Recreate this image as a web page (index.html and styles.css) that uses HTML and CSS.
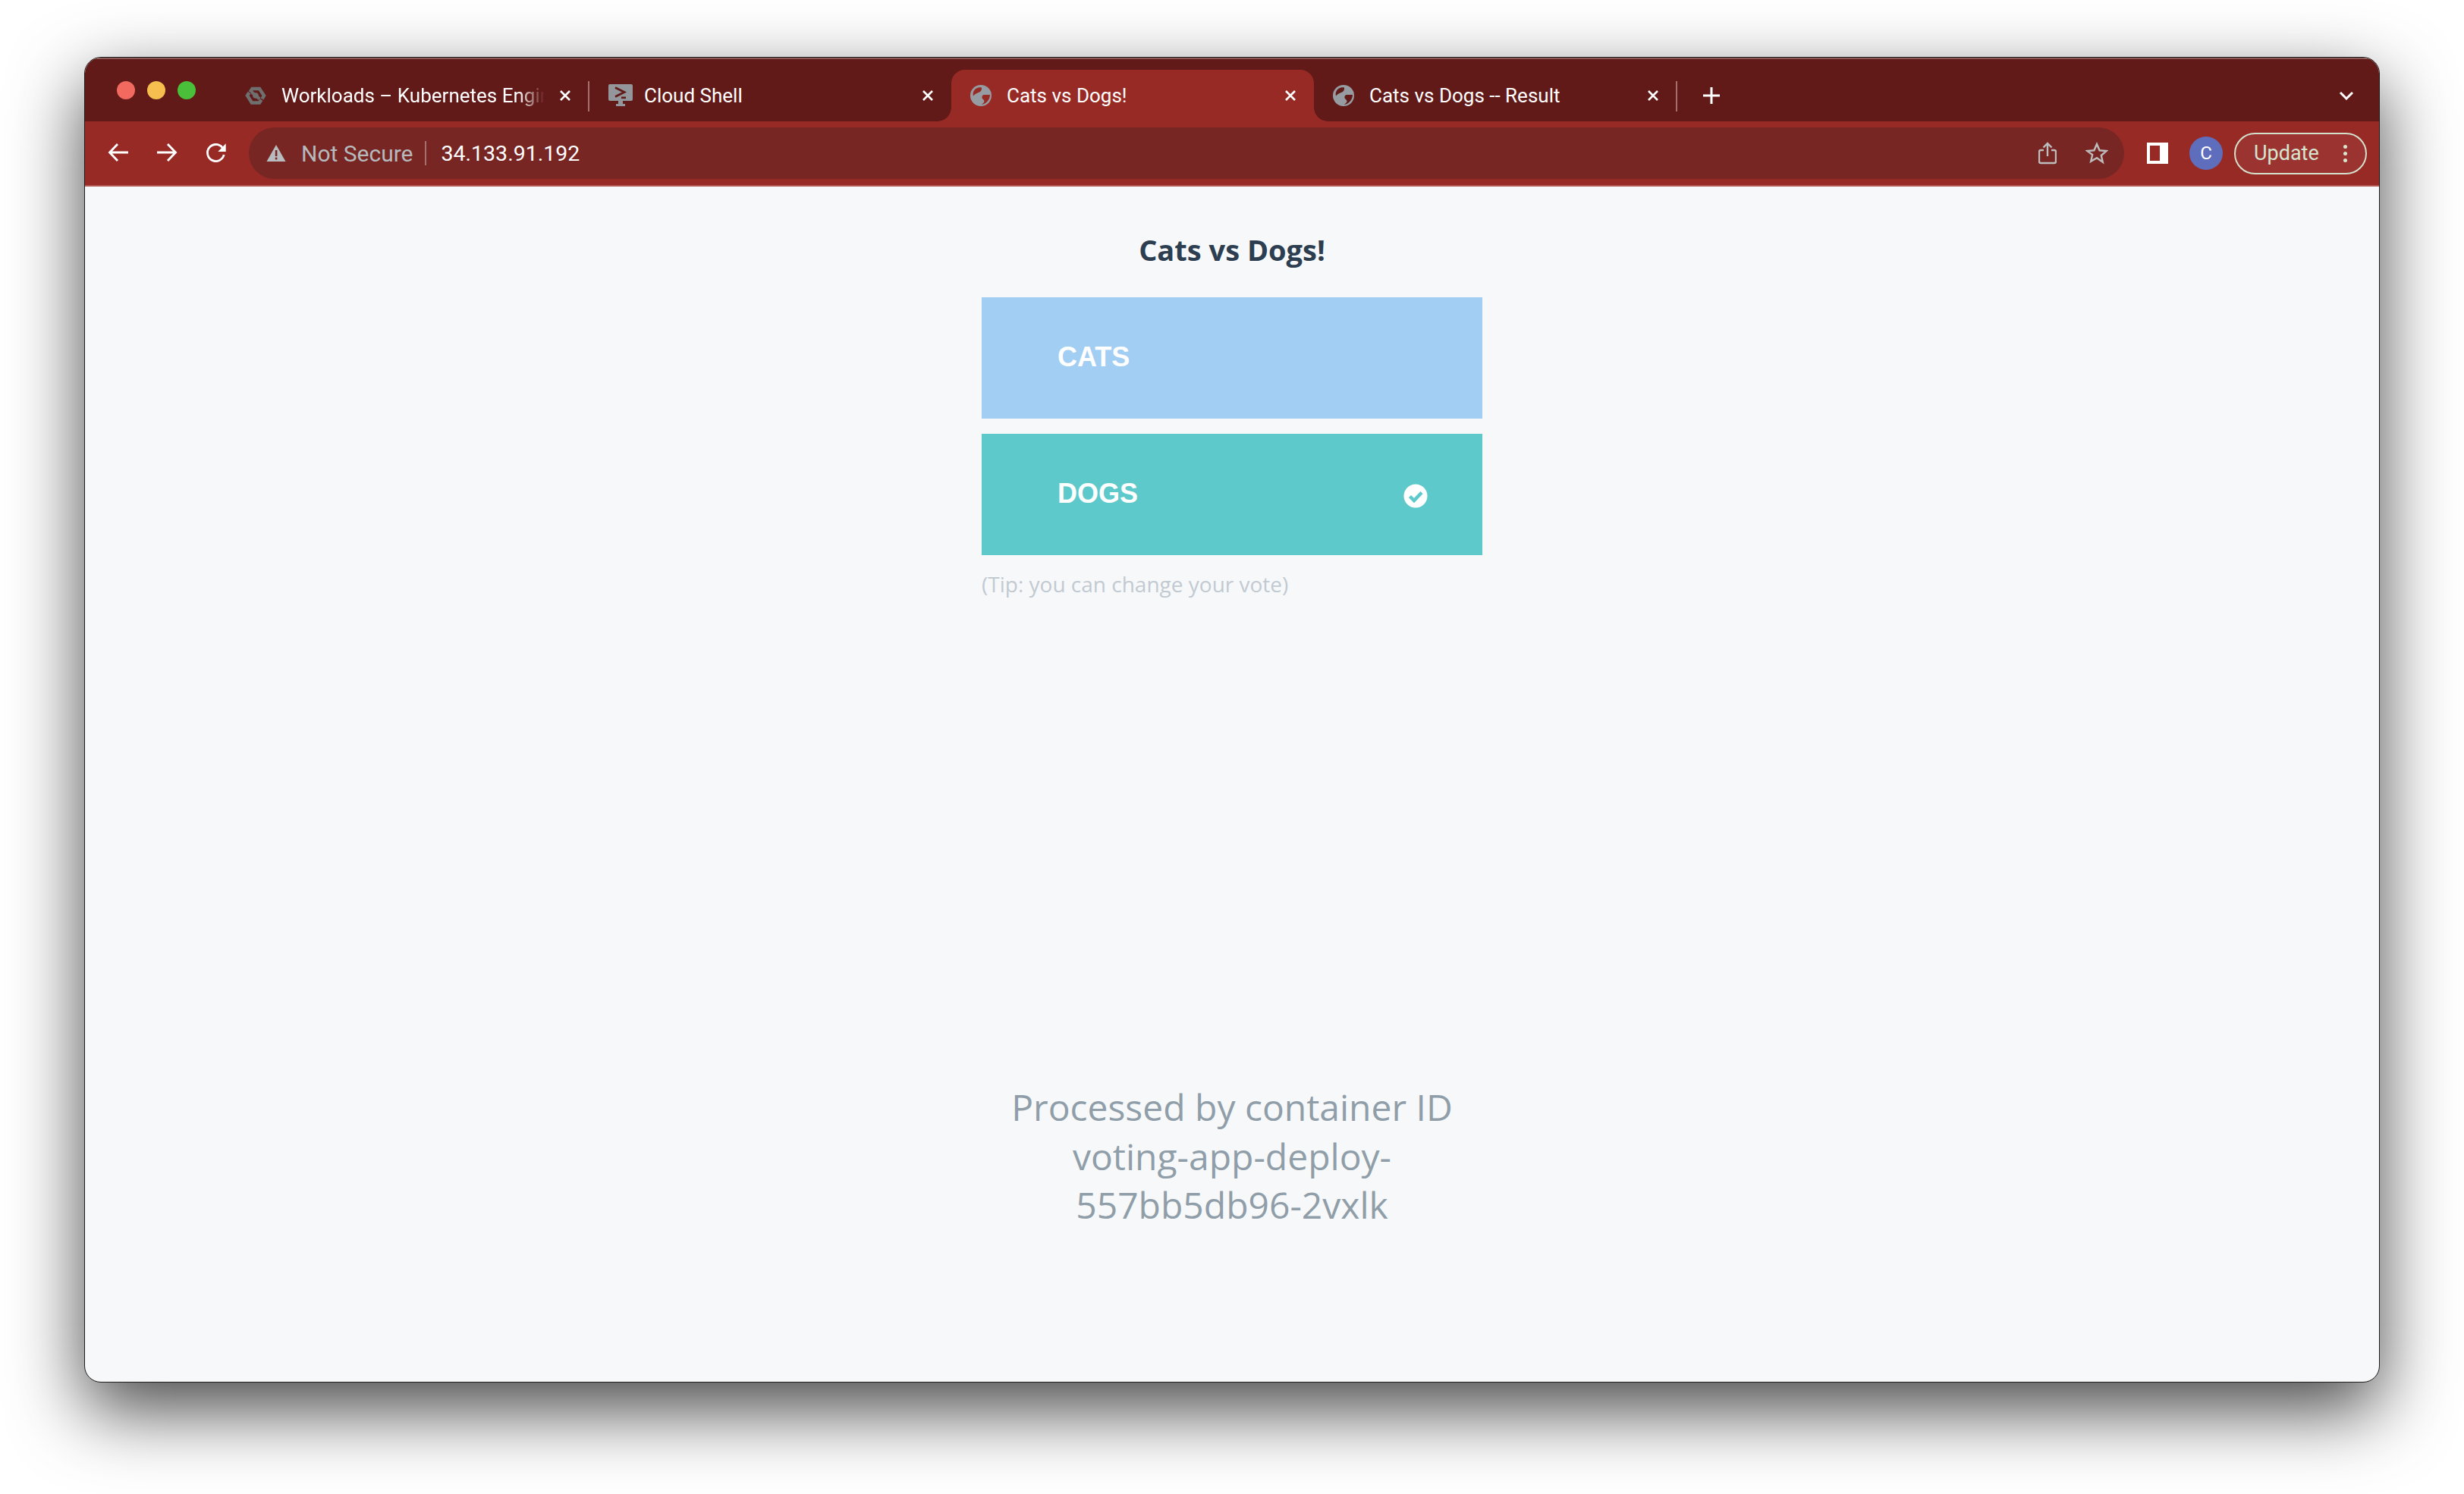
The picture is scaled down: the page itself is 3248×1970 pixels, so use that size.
FILE: index.html
```html
<!DOCTYPE html>
<html lang="en">
<head>
<meta charset="utf-8">
<title>Cats vs Dogs!</title>
<link rel="stylesheet" href="styles.css">
</head>
<body>
<div class="window">
  <div class="titlebar">
    <div class="lights"><span class="light red"></span><span class="light yellow"></span><span class="light green"></span></div>
    <div class="tabs">
      <div class="tab sep">
        <svg class="favicon" viewBox="0 0 28 28"><path d="M6.500 9.500L9.500 5H19L25 14L22.500 18.500M21.500 19.500L19 23.500H9L3 14L5.500 10M9 12.500L12 9.500M19 15.500L16 18.500" fill="none" stroke="#6f6f6f" stroke-width="4.500"/><circle cx="14" cy="14" r="3.800" fill="#6f6f6f"/></svg>
        <span class="tab-title fade">Workloads – Kubernetes Engine</span>
        <svg class="close" viewBox="0 0 16 16"><path d="M2 2l12 12M14 2L2 14"/></svg>
      </div>
      <div class="tab">
        <svg class="favicon wide" viewBox="0 0 32 30"><rect x="0" y="0" width="32" height="22" rx="2" fill="#93979c"/><rect x="13" y="22" width="6" height="4" fill="#93979c"/><rect x="10" y="26" width="12" height="3" fill="#93979c"/><path d="M9 4.500L21 10.500L9 16.500" fill="none" stroke="#621a18" stroke-width="2.800"/><rect x="17" y="16.500" width="6" height="2.600" fill="#621a18"/></svg>
        <span class="tab-title">Cloud Shell</span>
        <svg class="close" viewBox="0 0 16 16"><path d="M2 2l12 12M14 2L2 14"/></svg>
      </div>
      <div class="tab active">
        <svg class="favicon" viewBox="0 0 28 28"><circle cx="14" cy="14" r="14" fill="#969ca1"/><path d="M15 3.500C15 6 15 8 12 9.500C9 11 6 11.500 4 14.500C3 11 4 7 8 4.500C10 3.500 13 3 15 3.500zM26 13H18C16.500 13 15 15 15.500 17C16 19 18.500 19.500 18.500 21.500C18.500 23.500 16 24.500 15 26C20 25.500 26 20 26 13z" fill="#982a25"/></svg>
        <span class="tab-title">Cats vs Dogs!</span>
        <svg class="close" viewBox="0 0 16 16"><path d="M2 2l12 12M14 2L2 14"/></svg>
      </div>
      <div class="tab sep">
        <svg class="favicon" viewBox="0 0 28 28"><circle cx="14" cy="14" r="14" fill="#969ca1"/><path d="M15 3.500C15 6 15 8 12 9.500C9 11 6 11.500 4 14.500C3 11 4 7 8 4.500C10 3.500 13 3 15 3.500zM26 13H18C16.500 13 15 15 15.500 17C16 19 18.500 19.500 18.500 21.500C18.500 23.500 16 24.500 15 26C20 25.500 26 20 26 13z" fill="#621a18"/></svg>
        <span class="tab-title">Cats vs Dogs -- Result</span>
        <svg class="close" viewBox="0 0 16 16"><path d="M2 2l12 12M14 2L2 14"/></svg>
      </div>
    </div>
    <svg class="newtab" viewBox="0 0 24 24"><path d="M12 1v22M1 12h22"/></svg>
    <svg class="chevron" viewBox="0 0 20 12"><path d="M2 2l8 8 8-8"/></svg>
  </div>

  <div class="toolbar">
    <svg class="nav" viewBox="0 0 28 28"><path d="M27 13H3M13 2L2.500 13L13 24"/></svg>
    <svg class="nav" viewBox="0 0 28 28"><path d="M1 13H25M15 2L25.500 13L15 24"/></svg>
    <svg class="nav" viewBox="0 0 28 28"><path d="M23 6.500A11 11 0 1 0 25.200 16"/><path class="fill" d="M27.700 1.300V12H17.300z"/></svg>
    <div class="omnibox">
      <svg class="warn" viewBox="0 0 26 24"><path d="M13 1l12.500 22H.5z" fill="#b9bcbf"/><rect x="11.800" y="8" width="2.600" height="8" fill="#772623"/><rect x="11.800" y="17.600" width="2.600" height="2.800" fill="#772623"/></svg>
      <span class="not-secure">Not Secure</span>
      <span class="divider"></span>
      <span class="address">34.133.91.192</span>
      <svg class="omni-icon share" viewBox="0 0 24 30"><path d="M7 11H3a2 2 0 0 0-2 2v13a2 2 0 0 0 2 2h18a2 2 0 0 0 2-2V13a2 2 0 0 0-2-2h-4M12 19V2M6.500 7.500L12 2l5.500 5.500"/></svg>
      <svg class="omni-icon star" viewBox="0 0 30 30"><path d="M15 3l3.600 8.300 9 .8-6.800 5.900 2 8.800L15 21.200 7.200 25.800l2-8.800L2.400 12.100l9-.8z"/></svg>
    </div>
    <span class="panel"><span class="panel-hole"></span></span>
    <span class="avatar">C</span>
    <div class="update">
      <span>Update</span>
      <span class="dots"><i></i><i></i><i></i></span>
    </div>
  </div>

  <div class="content">
    <div class="vote">
      <h1 class="heading">Cats vs Dogs!</h1>
      <div class="choice cats"><span>CATS</span></div>
      <div class="choice dogs">
        <span>DOGS</span>
        <svg class="check" viewBox="0 0 32 32"><circle cx="16" cy="16" r="15.500" fill="#fff"/><path d="M8.500 16.500l5.500 5.500 10-10.500" fill="none" stroke="#5ec9ca" stroke-width="4.500"/></svg>
      </div>
      <p class="tip">(Tip: you can change your vote)</p>
    </div>
    <div class="processed">Processed by container ID voting-app-deploy-557bb5db96-2vxlk</div>
  </div>
</div>
</body>
</html>
```
FILE: styles.css
```css
* { box-sizing: border-box; }
html, body { margin: 0; height: 100%; background: #fff; }
body {
  width: 3248px;
  height: 1970px;
  overflow: hidden;
  padding: 75px 0 0 111px;
  font-family: Roboto, "Liberation Sans", sans-serif;
  font-variant-ligatures: none;
}
.window {
  width: 3026px;
  height: 1748px;
  border: 1px solid #1c1c1c;
  border-radius: 22px;
  display: flex;
  flex-direction: column;
  background: #f7f8fa;
  box-shadow: 0 36px 96px rgba(0, 0, 0, .72);
  overflow: hidden;
}
.titlebar {
  flex: none;
  height: 84px;
  background: #621a18;
  display: flex;
  align-items: flex-end;
  padding-left: 42px;
  box-shadow: inset 0 2px 0 rgba(255, 255, 255, .28);
}
.lights {
  display: flex;
  gap: 16px;
  align-self: flex-start;
  margin-top: 31px;
  margin-right: 40px;
}
.light { width: 24px; height: 24px; border-radius: 50%; }
.red { background: #f1695f; }
.yellow { background: #f6bd4f; }
.green { background: #4abf39; }
.tabs { display: flex; }
.tab {
  position: relative;
  width: 478px;
  height: 68px;
  padding-left: 25px;
  display: flex;
  align-items: center;
  color: #fff;
  font-size: 26px;
}
.tab.active {
  background: #982a25;
  border-radius: 18px 18px 0 0;
}
.tab.active::before, .tab.active::after {
  content: "";
  position: absolute;
  bottom: 0;
  width: 18px;
  height: 18px;
}
.tab.active::before { left: -18px; background: radial-gradient(circle at 0 0, transparent 17.500px, #982a25 18px); }
.tab.active::after { right: -18px; background: radial-gradient(circle at 100% 0, transparent 17.500px, #982a25 18px); }
.tab.sep::after {
  content: "";
  position: absolute;
  right: -1px;
  top: 15px;
  width: 2px;
  height: 40px;
  background: #a56f6c;
}
.favicon { flex: none; width: 28px; height: 28px; margin-right: 20px; }
.favicon.wide { width: 32px; height: 30px; margin-left: 1px; margin-right: 15px; }
.tab-title { width: 354px; white-space: nowrap; overflow: hidden; }
.tab-title.fade {
  -webkit-mask-image: linear-gradient(90deg, #000 88%, transparent 98%);
  mask-image: linear-gradient(90deg, #000 88%, transparent 98%);
}
.close {
  flex: none;
  width: 16px;
  height: 16px;
  position: relative;
  margin-left: 12px;
  fill: none;
  stroke: #fff;
  stroke-width: 2.600;
}
.newtab {
  flex: none;
  align-self: flex-start;
  width: 24px;
  height: 24px;
  margin: 38px 0 0 34px;
  fill: none;
  stroke: #fff;
  stroke-width: 3;
}
.chevron {
  flex: none;
  align-self: flex-start;
  width: 20px;
  height: 12px;
  margin: 44px 0 0 815px;
  fill: none;
  stroke: #fff;
  stroke-width: 3;
}
.toolbar {
  flex: none;
  height: 86px;
  background: #982a25;
  border-bottom: 2px solid #b45a56;
  display: flex;
  align-items: center;
  padding: 0 0 0 30px;
}
.nav {
  flex: none;
  width: 28px;
  height: 28px;
  margin-right: 36px;
  fill: none;
  stroke: #fff;
  stroke-width: 2.800;
}
.nav .fill { fill: #fff; stroke: none; }
.omnibox {
  flex: none;
  width: 2472px;
  height: 68px;
  margin-left: -6px;
  border-radius: 34px;
  background: #772623;
  display: flex;
  align-items: center;
  padding-left: 23px;
}
.warn { flex: none; width: 26px; height: 24px; margin-right: 20px; }
.not-secure { font-size: 30px; color: #b6babd; white-space: nowrap; }
.divider { width: 2px; height: 32px; background: #a56f6c; margin: 0 20px 0 15px; }
.address { font-size: 28.500px; color: #fff; white-space: nowrap; flex: 1; }
.omni-icon {
  flex: none;
  fill: none;
  stroke: #bdbdbd;
  stroke-width: 2.400;
}
.share { width: 24px; height: 30px; margin-right: 38px; }
.star { width: 30px; height: 30px; margin-right: 21px; }
.panel {
  flex: none;
  width: 28px;
  height: 28px;
  margin-left: 30px;
  background: #fff;
  padding: 4px 0 0 4px;
}
.panel-hole { display: block; width: 13px; height: 20px; background: #982a25; }
.avatar {
  flex: none;
  width: 44px;
  height: 44px;
  margin-left: 28px;
  border-radius: 50%;
  background: #5f6dbd;
  color: #fff;
  font-size: 24px;
  display: flex;
  align-items: center;
  justify-content: center;
}
.update {
  flex: none;
  width: 175px;
  height: 55px;
  margin-left: 15px;
  border: 2px solid #d2e0cc;
  border-radius: 28px;
  background: #9b3430;
  color: #d6e5d0;
  font-size: 27px;
  display: flex;
  align-items: center;
  padding-left: 24px;
}
.dots { margin-left: 32px; display: flex; flex-direction: column; gap: 4px; }
.dots i { display: block; width: 5px; height: 5px; border-radius: 50%; background: #d6e5d0; }
.content {
  flex: 1;
  display: flex;
  flex-direction: column;
  align-items: center;
  font-family: "Open Sans", "Liberation Sans", sans-serif;
}
.vote { width: 660px; }
.heading {
  margin: 58px 0 38px;
  font-size: 38px;
  line-height: 50px;
  font-weight: 700;
  color: #2c3e50;
  text-align: center;
}
.choice {
  height: 160px;
  margin-bottom: 20px;
  padding: 0 72px 3px 100px;
  display: flex;
  align-items: center;
  justify-content: space-between;
  color: #fff;
  font-family: "Liberation Sans", sans-serif;
  font-weight: 700;
  font-size: 36px;
}
.cats { background: #a3cef4; }
.dogs { background: #5ec9ca; }
.check { width: 32px; height: 32px; margin-top: 6px; }
.tip {
  margin: -4px 0 0;
  font-size: 28px;
  line-height: 44px;
  color: #c2cad1;
}
.processed {
  width: 660px;
  margin-top: 636px;
  font-size: 48px;
  line-height: 64.500px;
  color: #8f9ea8;
  text-align: center;
}
```
